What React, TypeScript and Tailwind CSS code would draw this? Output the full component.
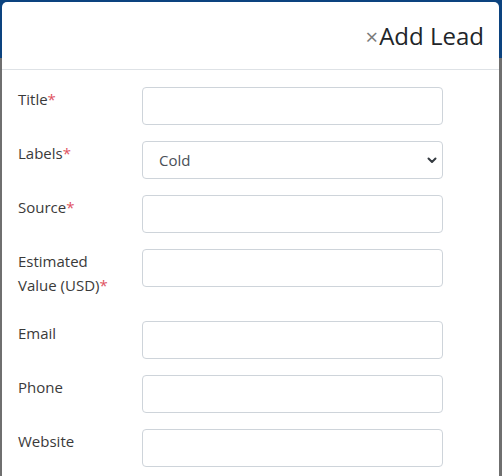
import React from "react";

const font = { fontFamily: '"Open Sans", "Noto Sans", sans-serif' };

function Label({ text, required }: { text: React.ReactNode; required?: boolean }) {
  return (
    <label className="w-[124px] shrink-0 pb-2 text-[15px] leading-[24px] text-[#3a3a3a]">
      {text}
      {required && <span className="text-[#e0525f]">*</span>}
    </label>
  );
}

function TextRow({ label, required }: { label: React.ReactNode; required?: boolean }) {
  return (
    <div className="flex items-start mb-4">
      <Label text={label} required={required} />
      <input
        type="text"
        className="w-[301px] h-[38px] rounded-[4px] border border-[#ced4da] bg-white px-4 text-[15px] text-[#495057] outline-none"
      />
    </div>
  );
}

export default function App() {
  return (
    <div
      className="w-[502px] h-[476px] overflow-hidden bg-[linear-gradient(to_bottom,#0c437f_0px,#0c437f_58px,#6f6f6f_58px,#6f6f6f_100%)] pt-[2px] pl-[2px] pr-[3px]"
      style={font}
    >
      <div className="h-full bg-white rounded-t-[5px]">
        <div className="flex items-center justify-end h-[68px] pr-[15px] border-b border-[#dee2e6]">
          <button className="text-[22px] leading-none text-[#7a7a7a] mt-[1px] mr-[1px]">×</button>
          <h2 className="text-[24px] leading-[30px] text-[#212529]">Add Lead</h2>
        </div>

        <div className="pl-[16px] pt-[17px]">
          <TextRow label="Title" required />

          <div className="flex items-start mb-4">
            <Label text="Labels" required />
            <div className="relative w-[301px] h-[38px]">
              <select className="appearance-none w-full h-full rounded-[4px] border border-[#ced4da] bg-white pl-4 pr-8 text-[15px] text-[#495057] outline-none">
                <option>Cold</option>
                <option>Warm</option>
                <option>Hot</option>
              </select>
              <svg
                className="absolute right-[6px] top-[16px] pointer-events-none"
                width="10"
                height="7"
                viewBox="0 0 10 7"
                fill="none"
                stroke="#343a40"
                strokeWidth="2"
                strokeLinecap="round"
                strokeLinejoin="round"
              >
                <path d="M1.5 1.5 5 5l3.5-3.5" />
              </svg>
            </div>
          </div>

          <TextRow label="Source" required />
          <TextRow
            label={
              <>
                Estimated
                <br />
                Value (USD)
              </>
            }
            required
          />
          <TextRow label="Email" />
          <TextRow label="Phone" />
          <TextRow label="Website" />
        </div>
      </div>
    </div>
  );
}
